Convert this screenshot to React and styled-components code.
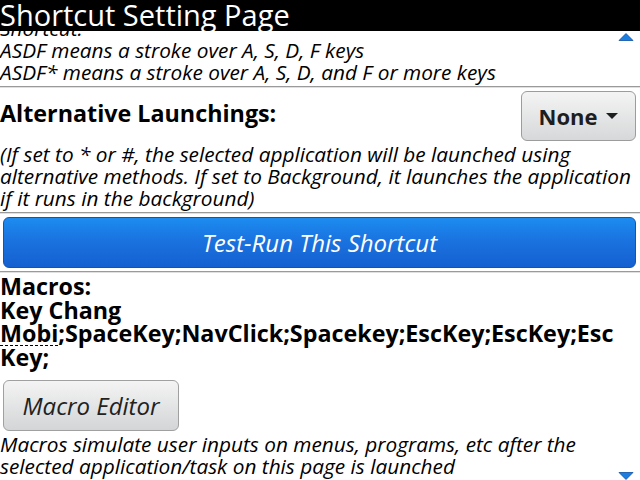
import React from "react";
import styled, { createGlobalStyle } from "styled-components";

const Global = createGlobalStyle`
  html, body { margin: 0; padding: 0; background: #fff; overflow: hidden; }
  body { font-family: "Open Sans", "DejaVu Sans", sans-serif; color: #000; }
`;

const Screen = styled.div`
  position: relative;
  width: 640px;
  height: 480px;
  display: flex;
  flex-direction: column;
  overflow: hidden;
  background: #fff;
`;

const TitleBar = styled.div`
  height: 31px;
  flex: none;
  background: #000;
  color: #fff;
  font-size: 29px;
  line-height: 30px;
  white-space: nowrap;
  position: relative;
  z-index: 2;
  overflow: hidden;
`;

const Content = styled.div`
  flex: 1;
  overflow: hidden;
  display: flex;
  flex-direction: column;
`;

const Scrolled = styled.div`
  margin-top: -14px;
  display: flex;
  flex-direction: column;
`;

const Italic = styled.div`
  font-style: italic;
  font-size: 20.8px;
  line-height: 22px;
  white-space: nowrap;
`;

const Section = styled.div`
  padding: ${(p) => p.$pad || "0"};
  border-bottom: ${(p) => (p.$sep ? "1px solid #9a9a9a" : "none")};
  box-shadow: ${(p) => (p.$sep ? "0 1px 0 #e0e0e0" : "none")};
`;

const Row = styled.div`
  display: flex;
  align-items: center;
  justify-content: space-between;
  padding: 4px 4px 2px 0;
`;

const BoldLabel = styled.div`
  font-weight: 700;
  font-size: 23.3px;
  line-height: 23.5px;
  white-space: nowrap;
`;

const RowLabel = styled(BoldLabel)`
  margin-top: -5px;
`;

const DropButton = styled.div`
  width: 115px;
  height: 50px;
  box-sizing: border-box;
  border: 1px solid #9c9c9c;
  border-radius: 6px;
  background: linear-gradient(#f4f4f4, #d6d8d9);
  display: flex;
  align-items: center;
  justify-content: center;
  gap: 9px;
  font-weight: 700;
  font-size: 22px;
  color: #1e1e1e;
`;

const Caret = styled.span`
  width: 0;
  height: 0;
  border-left: 6px solid transparent;
  border-right: 6px solid transparent;
  border-top: 6px solid #1e1e1e;
`;

const BlueButton = styled.div`
  margin: 4px 4px 3px 3px;
  height: 51px;
  box-sizing: border-box;
  border-radius: 6px;
  border: 1px solid #0f55b8;
  background: linear-gradient(#1c8cf0, #1a73e0 45%, #1560d0);
  color: #fff;
  font-style: italic;
  font-size: 24px;
  display: flex;
  align-items: center;
  justify-content: center;
`;

const GrayButton = styled.div`
  width: 176px;
  height: 51px;
  box-sizing: border-box;
  margin: 11px 0 2px 3px;
  border: 1px solid #a0a0a0;
  border-radius: 6px;
  background: linear-gradient(#f4f4f4, #d3d5d6);
  color: #222;
  font-style: italic;
  font-size: 24px;
  display: flex;
  align-items: center;
  justify-content: center;
`;

const Spell = styled.span`
  text-decoration: underline dashed #000;
  text-decoration-thickness: 1px;
  text-underline-offset: 3px;
`;

const ScrollArrow = styled.svg`
  position: absolute;
  right: 6px;
  ${(p) => (p.$down ? "bottom: 0;" : "top: 33px;")}
  z-index: 3;
`;

export default function App() {
  return (
    <Screen>
      <Global />
      <TitleBar>Shortcut Setting Page</TitleBar>
      <Content>
        <Scrolled>
          <Section $sep $pad="0 0 3px 0">
            <Italic>Shortcut:</Italic>
            <Italic>ASDF means a stroke over A, S, D, F keys</Italic>
            <Italic>ASDF* means a stroke over A, S, D, and F or more keys</Italic>
          </Section>
          <Section $sep $pad="0 0 3px 0">
            <Row>
              <RowLabel>Alternative Launchings:</RowLabel>
              <DropButton>
                None <Caret />
              </DropButton>
            </Row>
            <Italic>(If set to * or #, the selected application will be launched using</Italic>
            <Italic>alternative methods. If set to Background, it launches the application</Italic>
            <Italic>if it runs in the background)</Italic>
          </Section>
          <Section $sep>
            <BlueButton>Test-Run This Shortcut</BlueButton>
          </Section>
          <Section $pad="3px 0 0 0">
            <BoldLabel>Macros:</BoldLabel>
            <BoldLabel>Key Chang</BoldLabel>
            <BoldLabel>
              <Spell>Mobi</Spell>;SpaceKey;NavClick;Spacekey;EscKey;EscKey;Esc
            </BoldLabel>
            <BoldLabel>Key;</BoldLabel>
            <GrayButton>Macro Editor</GrayButton>
            <Italic>Macros simulate user inputs on menus, programs, etc after the</Italic>
            <Italic>selected application/task on this page is launched</Italic>
          </Section>
        </Scrolled>
      </Content>
      <ScrollArrow width="16" height="8" viewBox="0 0 16 8">
        <path d="M1 7.5 L8 0.5 L15 7.5 Z" fill="#1a7fe0" stroke="#0d4fa0" strokeWidth="0.8" />
      </ScrollArrow>
      <ScrollArrow $down width="16" height="8" viewBox="0 0 16 8">
        <path d="M1 0.5 L8 7.5 L15 0.5 Z" fill="#1a7fe0" stroke="#0d4fa0" strokeWidth="0.8" />
      </ScrollArrow>
    </Screen>
  );
}
